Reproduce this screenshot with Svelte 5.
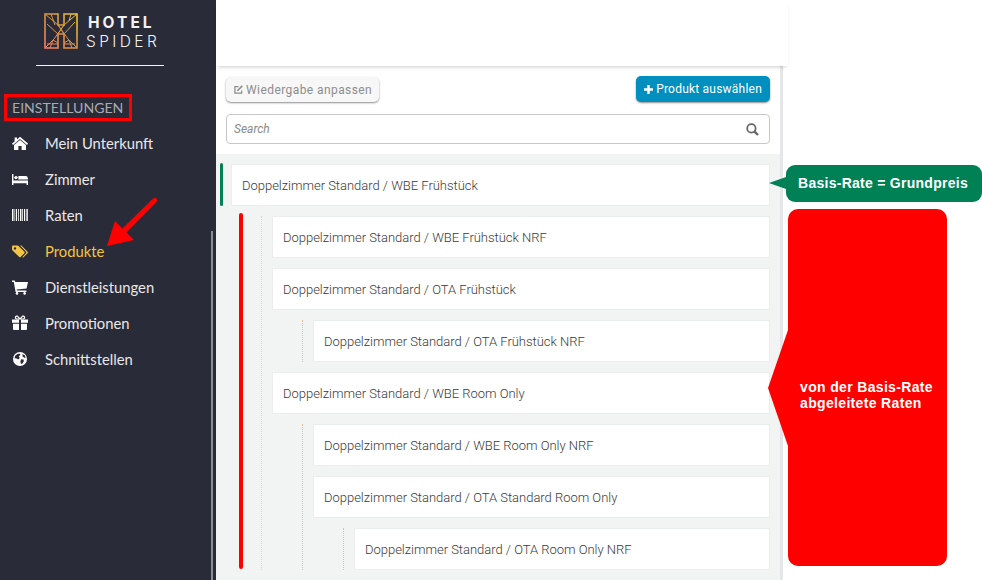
<script>
	const nav = [
		{ label: 'Mein Unterkunft', icon: 'home' },
		{ label: 'Zimmer', icon: 'bed' },
		{ label: 'Raten', icon: 'barcode' },
		{ label: 'Produkte', icon: 'tags', active: true },
		{ label: 'Dienstleistungen', icon: 'cart' },
		{ label: 'Promotionen', icon: 'gift' },
		{ label: 'Schnittstellen', icon: 'globe' }
	];

	const prefix = 'Doppelzimmer Standard / ';
</script>

{#snippet card(name)}
	<div class="card">{prefix}{name}</div>
{/snippet}

<div class="app">
	<aside class="sidebar">
		<div class="brand">
			<div class="logo">
				<svg width="34" height="36" viewBox="0 0 34 36" fill="none">
					<defs>
						<linearGradient id="lg" x1="0" y1="1" x2="1" y2="0">
							<stop offset="0" stop-color="#ee7f68" />
							<stop offset="0.55" stop-color="#d8953f" />
							<stop offset="1" stop-color="#eec93c" />
						</linearGradient>
					</defs>
					<path
						d="M1 1H14V12H20V1H33V35H20V21H14V35H1Z"
						stroke="url(#lg)"
						stroke-width="1.6"
					/>
					<path
						d="M1 1L14 12L24 26L33 35M33 1L20 12L10 26L1 35M3 11L14 21M31 9L20 21M14 12L20 21M20 12L14 21M6 35L9 27L14 30M28 35L25 27L20 30M3 31H14M20 31H31M7 1L11 12M27 1L25 8"
						stroke="url(#lg)"
						stroke-width="1"
					/>
				</svg>
				<div class="wordmark">
					<div class="hotel">HOTEL</div>
					<div class="spider">SPIDER</div>
				</div>
			</div>
			<div class="rule"></div>
		</div>

		<div class="section"><span>EINSTELLUNGEN</span></div>

		<ul class="nav">
			{#each nav as item}
				<li class:active={item.active}>
					<svg class="nav-icon" width="16" height="16" viewBox="0 0 16 16" fill="currentColor">
						{#if item.icon === 'home'}
							<path d="M8 1.8L16 8.6L15 9.9L8 3.9L1 9.9L0 8.6L2.6 6.4V2.6H5V4.4Z" />
							<path d="M8 4.9L14 10V15H9.6V11H6.4V15H2V10Z" />
						{:else if item.icon === 'bed'}
							<path d="M0 3H1.4V9.5H16V14H14.6V12.2H1.4V14H0Z" />
							<circle cx="4" cy="6.6" r="1.7" />
							<path d="M6.4 5H13.5Q16 5 16 8.4H6.4Z" />
						{:else if item.icon === 'barcode'}
							<path d="M0 2H1.5V14H0ZM2.5 2H3.2V14H2.5ZM4 2H5V14H4ZM6.2 2H7V14H6.2ZM8 2H9.4V14H8ZM10.2 2H11V14H10.2ZM12 2H13.2V14H12ZM14 2H14.6V14H14ZM15.2 2H16V14H15.2Z" />
						{:else if item.icon === 'tags'}
							<path fill-rule="evenodd" d="M0 3.5Q0 2.5 1 2.5H6L12.4 8.8Q13 9.5 12.4 10.2L8.6 14Q7.9 14.5 7.2 14L0.6 7.4Q0 6.8 0 6ZM3 4.2A1.2 1.2 0 1 0 3 6.6A1.2 1.2 0 1 0 3 4.2Z" />
							<path d="M8 2.5H9.4L15.6 8.8Q16.2 9.5 15.6 10.2L11.6 14.2Q11 14.6 10.3 14.3L14 10.2Q14.6 9.5 14 8.8Z" />
						{:else if item.icon === 'cart'}
							<path d="M0 1.5H2.8L3.3 3H16L14.6 9.4L4.6 10.4L4.9 11.6H14.4V13H3.6L1.8 3H0Z" />
							<circle cx="5" cy="14.4" r="1.3" />
							<circle cx="12.6" cy="14.4" r="1.3" />
						{:else if item.icon === 'gift'}
							<path d="M1 8.8H7V15H2Q1 15 1 14ZM9 8.8H15V14Q15 15 14 15H9ZM0 4.6H7V7.8H0ZM9 4.6H16V7.8H9Z" />
							<path d="M8 4L5.5 1.2Q4 0.8 3.4 2.2Q3.2 3.8 5 4ZM8 4L10.5 1.2Q12 0.8 12.6 2.2Q12.8 3.8 11 4Z" fill="none" stroke="currentColor" stroke-width="1.2" />
						{:else}
							<path fill-rule="evenodd" d="M8 1A7 7 0 1 0 8 15A7 7 0 1 0 8 1ZM5 3.2L7.6 2.6L8.4 3.8L6.8 5.6L7.8 7L6.2 8.4L4 7.2L2.6 7.6L3 5ZM9 8.2L11.6 8.6L11.8 10.6L10 13L8.8 12.6L8.4 10.6ZM10.4 3L13 4.6L13.6 7L12 6.4L10.6 5.4Z" />
						{/if}
					</svg>
					<span>{item.label}</span>
				</li>
			{/each}
		</ul>

		<div class="scroll-thumb"></div>

		<svg class="nav-arrow" width="54" height="54" viewBox="0 0 54 54" fill="#f00">
			<path d="M1 49L9 24L16.5 31.5L47 1.5Q49 0 50.6 1.6Q52 3.2 50.5 5L20.5 35.5L28 43Z" />
		</svg>
	</aside>

	<main class="main">
		<header class="topbar"></header>
		<div class="content">
			<div class="toolbar">
				<button class="btn btn-light" type="button">
					<svg width="9" height="9" viewBox="0 0 10 10" fill="none" stroke="currentColor" stroke-width="1.4">
						<path d="M8.5 6V9H1V1.8H5" />
						<path d="M3.8 6.4L9.2 1" stroke-width="1.8" />
					</svg>
					Wiedergabe anpassen
				</button>
				<button class="btn btn-primary" type="button">
					<svg width="9" height="9" viewBox="0 0 9 9" fill="currentColor">
						<path d="M3.3 0H5.7V3.3H9V5.7H5.7V9H3.3V5.7H0V3.3H3.3Z" />
					</svg>
					Produkt auswählen
				</button>
			</div>

			<div class="search">
				<span>Search</span>
				<svg width="13" height="13" viewBox="0 0 13 13" fill="none" stroke="#666">
					<circle cx="5.4" cy="5.4" r="4.2" stroke-width="1.8" />
					<path d="M8.6 8.6L12 12" stroke-width="2.4" />
				</svg>
			</div>

			<div class="tree">
				<div class="base-mark"></div>
				<div class="derived-mark"></div>
				{@render card('WBE Frühstück')}
				<div class="branch">
					{@render card('WBE Frühstück NRF')}
					{@render card('OTA Frühstück')}
					<div class="branch">
						{@render card('OTA Frühstück NRF')}
					</div>
					{@render card('WBE Room Only')}
					<div class="branch">
						{@render card('WBE Room Only NRF')}
						{@render card('OTA Standard Room Only')}
						<div class="branch">
							{@render card('OTA Room Only NRF')}
						</div>
					</div>
				</div>
			</div>
		</div>
	</main>

	<div class="callout callout-green">Basis-Rate = Grundpreis</div>
	<div class="callout callout-red">von der Basis-Rate<br />abgeleitete Raten</div>
</div>

<style>
	:global(body) {
		margin: 0;
		background: #fff;
	}

	.app {
		position: relative;
		display: flex;
		width: 982px;
		height: 580px;
		overflow: hidden;
		font-family: Roboto, sans-serif;
	}

	.sidebar {
		position: relative;
		flex: none;
		width: 216px;
		background: #2a2b38;
		color: #fff;
		font-family: Lato, sans-serif;
	}

	.brand {
		padding: 13px 36px 0;
		height: 53px;
	}

	.logo {
		display: flex;
		gap: 10px;
		padding-left: 8px;
		height: 52px;
		align-items: flex-start;
	}

	.wordmark {
		font-family: Inter, sans-serif;
		font-size: 15.5px;
		line-height: 19px;
		color: #f2f2f2;
	}

	.hotel {
		font-weight: 700;
		letter-spacing: 3px;
	}

	.spider {
		font-weight: 300;
		letter-spacing: 3.4px;
		margin-left: -2px;
	}

	.rule {
		width: 128px;
		border-top: 1px solid #f4f4f4;
	}

	.section {
		margin: 28px 0 0 4px;
		width: 128px;
		height: 27px;
		box-sizing: border-box;
		border: 3px solid #f00;
		padding-left: 5px;
		line-height: 21px;
		font-size: 14.1px;
		color: #a9aab0;
		white-space: nowrap;
	}

	.nav {
		list-style: none;
		margin: 4px 0 0;
		padding: 0;
	}

	.nav li {
		display: flex;
		align-items: center;
		height: 36px;
		padding-left: 12px;
		gap: 17px;
		font-size: 14.8px;
		color: #e8e8ea;
	}

	.nav li.active {
		color: #f4c542;
	}

	.nav-icon {
		flex: none;
		color: #fff;
	}

	.nav li.active .nav-icon {
		color: #f4c542;
	}

	.scroll-thumb {
		position: absolute;
		right: 3px;
		top: 231px;
		bottom: 0;
		width: 2px;
		background: #8c8d94;
	}

	.nav-arrow {
		position: absolute;
		left: 106px;
		top: 197px;
	}

	.main {
		flex: none;
		width: 572px;
	}

	.topbar {
		position: relative;
		height: 66px;
		background: #fff;
		box-shadow: 0 3px 4px -2px rgba(0, 0, 0, 0.2);
	}

	.content {
		width: 564px;
		height: 514px;
		border-right: 3px solid #e4e6ea;
		background: #fff;
	}

	.toolbar {
		display: flex;
		justify-content: space-between;
		align-items: flex-start;
		padding: 10px 10px 0;
		height: 38px;
	}

	.btn {
		display: flex;
		align-items: center;
		gap: 3px;
		height: 26px;
		padding: 0 8px;
		border: none;
		border-radius: 5px;
		font-family: Roboto, sans-serif;
		font-size: 12px;
		box-shadow: 0 1px 2px rgba(0, 0, 0, 0.45);
	}

	.btn-light {
		margin-top: 1px;
		height: 25px;
		padding-right: 7px;
		letter-spacing: 0.42px;
		background: #f7f7f7;
		color: #8d8d8d;
	}

	.btn-primary {
		letter-spacing: 0.22px;
		background: #008fbe;
		color: #fff;
	}

	.search {
		display: flex;
		justify-content: space-between;
		align-items: center;
		margin: 0 10px;
		height: 30px;
		box-sizing: border-box;
		padding: 0 10px 0 7px;
		border: 1px solid #c8c8c8;
		border-radius: 4px;
		font-size: 12px;
		font-style: italic;
		color: #8a8a8a;
	}

	.tree {
		position: relative;
		margin-top: 10px;
		height: 426px;
		box-sizing: border-box;
		padding: 10px 10px 0 15px;
		background: #f2f4f4;
	}

	.base-mark {
		position: absolute;
		left: 4px;
		top: 9px;
		width: 3px;
		height: 43px;
		border-radius: 2px;
		background: #008055;
	}

	.derived-mark {
		position: absolute;
		left: 23px;
		top: 59px;
		width: 4px;
		height: 356px;
		border-radius: 2px;
		background: #f00;
	}

	.card {
		box-sizing: border-box;
		height: 42px;
		margin-bottom: 10px;
		padding-left: 10px;
		border: 1px solid #eceeee;
		background: #fff;
		font-size: 13px;
		font-weight: 300;
		letter-spacing: -0.02px;
		line-height: 42px;
		color: #3a3a3a;
	}

	.branch {
		margin-left: 30px;
		padding-left: 10px;
		border-left: 1px dotted #f3d3ab;
	}

	.branch .branch {
		margin-bottom: 10px;
		border-left-color: #f8bd75;
	}

	.branch:last-child {
		margin-bottom: 0;
	}

	.branch > .card:last-child {
		margin-bottom: 0;
	}

	.callout {
		position: absolute;
		color: #fff;
		font-family: 'Liberation Sans', Arial, sans-serif;
		font-weight: 700;
		font-size: 14px;
	}

	.callout::before {
		content: '';
		position: absolute;
		top: 50%;
		width: 0;
		height: 0;
		border-style: solid;
		border-color: transparent;
	}

	.callout-green {
		left: 786px;
		top: 165px;
		width: 196px;
		height: 37px;
		box-sizing: border-box;
		padding-left: 12px;
		border-radius: 9px;
		background: #008055;
		line-height: 37px;
		letter-spacing: 0.27px;
	}

	.callout-green::before {
		left: -17px;
		margin-top: -6.5px;
		border-width: 6.5px 17px 6.5px 0;
		border-right-color: #008055;
	}

	.callout-red {
		left: 788px;
		top: 209px;
		width: 159px;
		height: 357px;
		box-sizing: border-box;
		padding: 170px 0 0 12px;
		border-radius: 10px;
		background: #f00;
		line-height: 16px;
		letter-spacing: 0.34px;
	}

	.callout-red::before {
		left: -20px;
		margin-top: -58px;
		border-width: 58px 20px 58px 0;
		border-right-color: #f00;
	}
</style>
